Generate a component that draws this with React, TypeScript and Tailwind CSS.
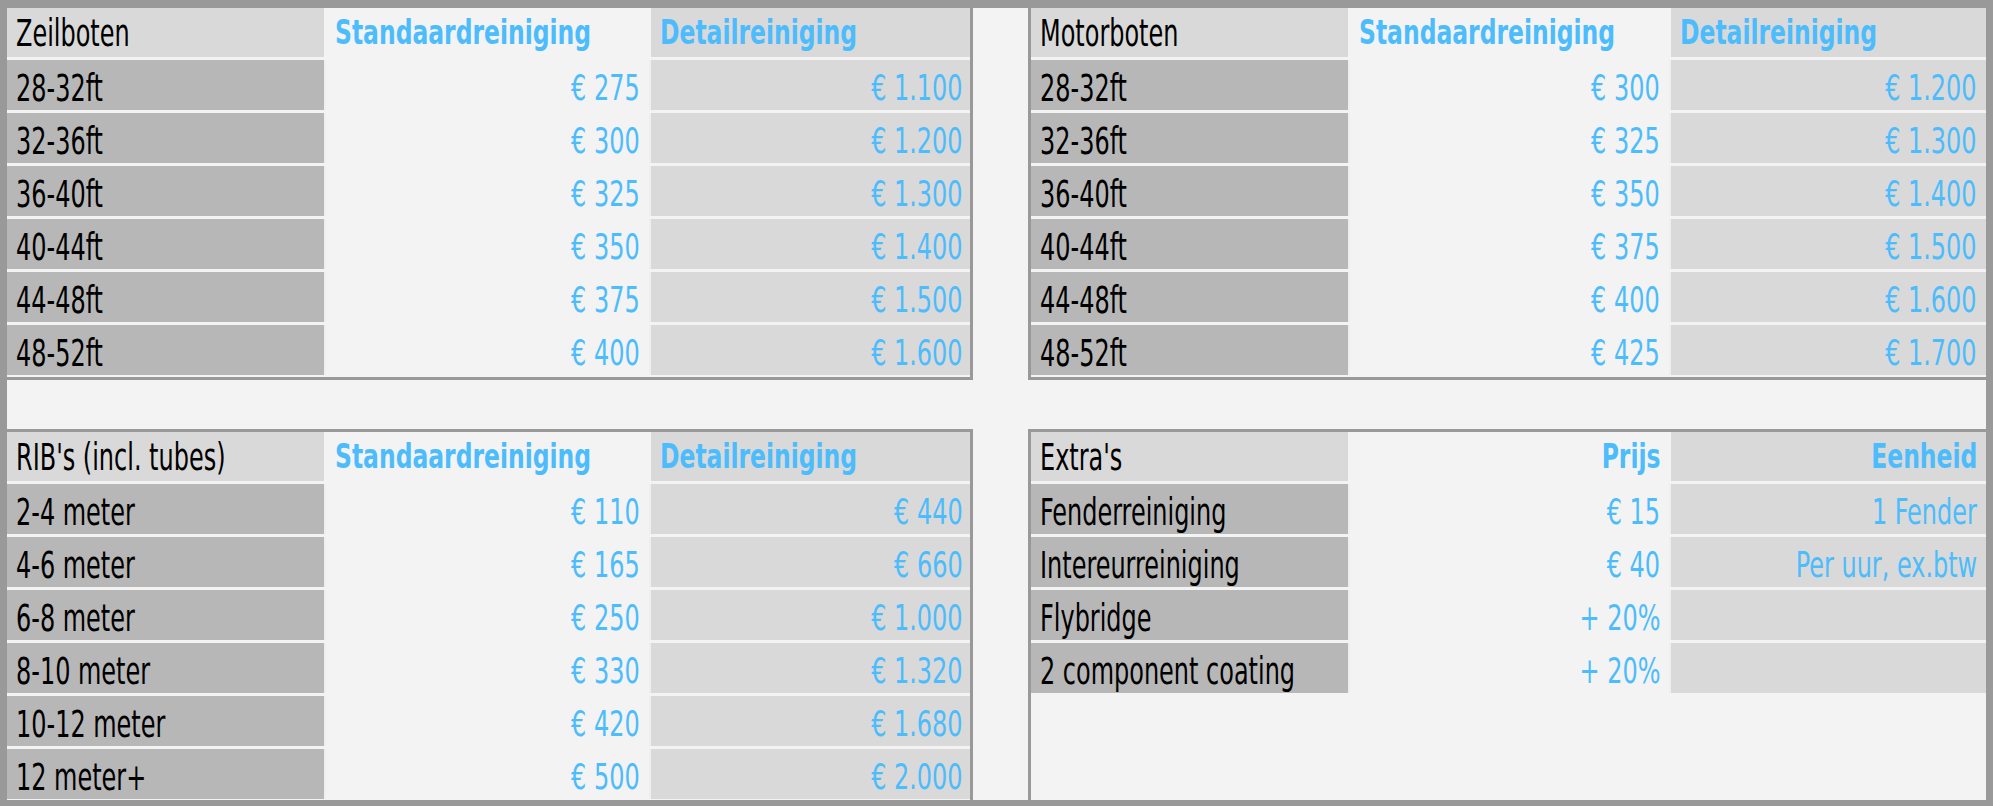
type Row = [string, string, string];

type TableProps = {
  title: string;
  head2: string;
  head3: string;
  rows: Row[];
  cols: string;
  boxClass: string;
  rightHead?: boolean;
};

const zeilboten: Row[] = [
  ["28-32ft", "€ 275", "€ 1.100"],
  ["32-36ft", "€ 300", "€ 1.200"],
  ["36-40ft", "€ 325", "€ 1.300"],
  ["40-44ft", "€ 350", "€ 1.400"],
  ["44-48ft", "€ 375", "€ 1.500"],
  ["48-52ft", "€ 400", "€ 1.600"],
];

const motorboten: Row[] = [
  ["28-32ft", "€ 300", "€ 1.200"],
  ["32-36ft", "€ 325", "€ 1.300"],
  ["36-40ft", "€ 350", "€ 1.400"],
  ["40-44ft", "€ 375", "€ 1.500"],
  ["44-48ft", "€ 400", "€ 1.600"],
  ["48-52ft", "€ 425", "€ 1.700"],
];

const ribs: Row[] = [
  ["2-4 meter", "€ 110", "€ 440"],
  ["4-6 meter", "€ 165", "€ 660"],
  ["6-8 meter", "€ 250", "€ 1.000"],
  ["8-10 meter", "€ 330", "€ 1.320"],
  ["10-12 meter", "€ 420", "€ 1.680"],
  ["12 meter+", "€ 500", "€ 2.000"],
];

const extras: Row[] = [
  ["Fenderreiniging", "€ 15", "1 Fender"],
  ["Intereurreiniging", "€ 40", "Per uur, ex.btw"],
  ["Flybridge", "+ 20%", ""],
  ["2 component coating", "+ 20%", ""],
];

// condensed look: DejaVu squeezed horizontally
const Label = ({ text, pt }: { text: string; pt: string }) => (
  <div className={`flex items-center pl-[9px] ${pt}`}>
    <span className="inline-block origin-left scale-x-[0.72] whitespace-nowrap text-[37px] leading-none text-black">
      {text}
    </span>
  </div>
);

const Value = ({ text, bg }: { text: string; bg: string }) => (
  <div className={`flex items-center justify-end pr-[9px] pt-[6px] ${bg}`}>
    <span className="inline-block origin-right scale-x-[0.74] whitespace-nowrap text-[36px] leading-none text-[#4cbcfc]">
      {text}
    </span>
  </div>
);

const Head = ({ text, bg, right }: { text: string; bg: string; right?: boolean }) => (
  <div className={`flex items-center px-[9px] ${bg} ${right ? "justify-end" : "justify-start"}`}>
    <span
      className={`inline-block scale-x-[0.79] whitespace-nowrap text-[33px] font-bold leading-none text-[#4cbcfc] ${
        right ? "origin-right" : "origin-left"
      }`}
    >
      {text}
    </span>
  </div>
);

const Table = ({ title, head2, head3, rows, cols, boxClass, rightHead }: TableProps) => (
  <div className={`flex flex-col gap-[3px] border-[#999999] bg-[#f3f3f3] overflow-hidden ${boxClass}`}>
    <div className={`grid ${cols} gap-x-[2px] h-[49px] shrink-0`}>
      <div className="bg-[#d9d9d9] flex">
        <Label text={title} pt="pt-[2px]" />
      </div>
      <Head text={head2} bg="bg-[#f3f3f3]" right={rightHead} />
      <Head text={head3} bg="bg-[#d9d9d9]" right={rightHead} />
    </div>
    {rows.map((r) => (
      <div key={r[0]} className={`grid ${cols} gap-x-[2px] h-[50px] shrink-0 bg-[#efefef]`}>
        <div className="bg-[#b7b7b7] flex">
          <Label text={r[0]} pt="pt-[6px]" />
        </div>
        <Value text={r[1]} bg="bg-[#f3f3f3]" />
        <Value text={r[2]} bg="bg-[#d9d9d9]" />
      </div>
    ))}
  </div>
);

export default function App() {
  return (
    <div className="w-[1993px] h-[806px] bg-[#f3f3f3] border-[#999999] border-l-[7px] border-r-[7px] border-t-[8px] border-b-[6px] font-['Liberation_Sans_Narrow','DejaVu_Sans_Condensed',Roboto,sans-serif]">
      <div className="grid grid-cols-[966px_958px] grid-rows-[372px_371px] gap-x-[55px] gap-y-[49px]">
        <Table
          title="Zeilboten"
          head2="Standaardreiniging"
          head3="Detailreiniging"
          rows={zeilboten}
          cols="grid-cols-[317px_323px_321px]"
          boxClass="border-r-[3px] border-b-[3px]"
        />
        <Table
          title="Motorboten"
          head2="Standaardreiniging"
          head3="Detailreiniging"
          rows={motorboten}
          cols="grid-cols-[317px_319px_315px]"
          boxClass="border-l-[3px] border-b-[3px]"
        />
        <Table
          title="RIB's (incl. tubes)"
          head2="Standaardreiniging"
          head3="Detailreiniging"
          rows={ribs}
          cols="grid-cols-[317px_323px_321px]"
          boxClass="border-r-[3px] border-t-[3px]"
        />
        <Table
          title="Extra's"
          head2="Prijs"
          head3="Eenheid"
          rows={extras}
          cols="grid-cols-[317px_319px_315px]"
          boxClass="border-l-[3px] border-t-[3px]"
          rightHead
        />
      </div>
    </div>
  );
}
